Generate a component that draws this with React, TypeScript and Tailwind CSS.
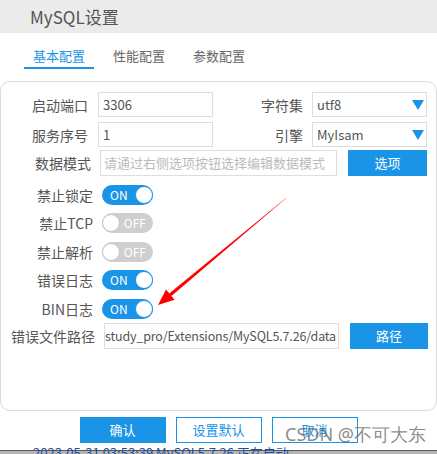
import React from 'react'

const BLUE = 'bg-[#1a94e6]'

function Toggle({ on }: { on: boolean }) {
  if (on) {
    return (
      <div className={`relative w-[51px] h-[20px] rounded-full ${BLUE} flex items-center`}>
        <span className="pl-[8px] text-[12px] leading-none text-white">ON</span>
        <span className="absolute right-0 top-[1px] w-[18px] h-[18px] rounded-full bg-white border border-[#1a94e6]" />
      </div>
    )
  }
  return (
    <div className="relative w-[51px] h-[20px] rounded-full bg-[#cfcfcf] flex items-center justify-end">
      <span className="pr-[7px] text-[12px] leading-none text-white">OFF</span>
      <span className="absolute left-0 top-[1px] w-[18px] h-[18px] rounded-full bg-white border border-[#c4c4c4]" />
    </div>
  )
}

function Caret() {
  return (
    <svg width="12" height="10" viewBox="0 0 12 10" className="mr-[2px]">
      <polygon points="0,0 12,0 6,10" fill="#1a94e6" />
    </svg>
  )
}

function Label({ w, children }: { w: string; children: React.ReactNode }) {
  return <div className={`${w} shrink-0 text-right text-[14px] leading-[20px] text-[#555]`}>{children}</div>
}

export default function App() {
  const toggles: { label: string; on: boolean; mt: string }[] = [
    { label: '禁止锁定', on: true, mt: 'mt-[9px]' },
    { label: '禁止TCP', on: false, mt: 'mt-[8px]' },
    { label: '禁止解析', on: false, mt: 'mt-[9px]' },
    { label: '错误日志', on: true, mt: 'mt-[8px]' },
    { label: 'BIN日志', on: true, mt: 'mt-[9px]' },
  ]

  return (
    <div className="relative w-[437px] h-[454px] overflow-hidden bg-white font-['Noto_Sans_CJK_SC',sans-serif]">
      {/* header */}
      <div className="h-[33px] bg-[#ebebeb] pl-[30px] flex items-center text-[17px] text-[#555]">MySQL设置</div>

      {/* tabs */}
      <div className="flex gap-[10px] pl-[24px] pt-[14px]">
        <div className="w-[70px] text-center text-[13px] leading-[18px] pb-[2px] text-[#1a94e6] border-b-2 border-[#1a94e6]">基本配置</div>
        <div className="w-[70px] text-center text-[13px] leading-[18px] pb-[2px] text-[#666]">性能配置</div>
        <div className="w-[70px] text-center text-[13px] leading-[18px] pb-[2px] text-[#666]">参数配置</div>
      </div>

      {/* panel */}
      <div className="mt-[12px] h-[330px] rounded-[10px] border border-[#dcdcdc] pt-[10px]">
        <div className="flex items-center h-[25px]">
          <Label w="w-[87px]">启动端口</Label>
          <div className="ml-[10px] w-[115px] h-[25px] border border-[#ddd] flex items-center pl-[4px] text-[13px] text-[#555]">3306</div>
          <Label w="w-[90px]">字符集</Label>
          <div className="ml-[9px] w-[115px] h-[25px] border border-[#ddd] flex items-center justify-between pl-[4px] text-[13px] text-[#555]">
            <span>utf8</span>
            <Caret />
          </div>
        </div>

        <div className="flex items-center h-[25px] mt-[5px]">
          <Label w="w-[87px]">服务序号</Label>
          <div className="ml-[10px] w-[115px] h-[25px] border border-[#ddd] flex items-center pl-[4px] text-[13px] text-[#555]">1</div>
          <Label w="w-[90px]">引擎</Label>
          <div className="ml-[9px] w-[115px] h-[25px] border border-[#ddd] flex items-center justify-between pl-[4px] text-[13px] text-[#555]">
            <span>MyIsam</span>
            <Caret />
          </div>
        </div>

        <div className="flex items-center h-[26px] mt-[3px]">
          <Label w="w-[90px]">数据模式</Label>
          <div className="ml-[9px] w-[237px] h-[26px] border border-[#ddd] flex items-center pl-[3px] text-[13px] text-[#bbb] whitespace-nowrap overflow-hidden">
            请通过右侧选项按钮选择编辑数据模式
          </div>
          <div className={`ml-[11px] w-[79px] h-[26px] ${BLUE} flex items-center justify-center text-[13px] text-white`}>选项</div>
        </div>

        {toggles.map((t) => (
          <div key={t.label} className={`flex items-center h-[20px] ${t.mt}`}>
            <Label w="w-[92px]">{t.label}</Label>
            <div className="ml-[9px]">
              <Toggle on={t.on} />
            </div>
          </div>
        ))}

        <div className="flex items-center h-[26px] mt-[4px]">
          <Label w="w-[94px]">错误文件路径</Label>
          <div className="ml-[9px] w-[235px] h-[26px] border border-[#ddd] flex items-center justify-end pr-[2px] text-[12.5px] tracking-[-0.15px] text-[#555] whitespace-nowrap overflow-hidden">
            <span className="shrink-0">D:/phpstudy_pro/Extensions/MySQL5.7.26/data</span>
          </div>
          <div className={`ml-[11px] w-[78px] h-[26px] ${BLUE} flex items-center justify-center text-[13px] text-white`}>路径</div>
        </div>
      </div>

      {/* buttons */}
      <div className="flex justify-center gap-[10px] mt-[6px]">
        <div className={`w-[86px] h-[26px] ${BLUE} flex items-center justify-center text-[13px] text-white`}>确认</div>
        <div className="w-[86px] h-[26px] border border-[#1a94e6] flex items-center justify-center text-[13px] text-[#1a94e6]">设置默认</div>
        <div className="w-[86px] h-[26px] border border-[#1a94e6] flex items-center justify-center text-[13px] text-[#1a94e6]">取消</div>
      </div>

      {/* log line behind the dialog */}
      <div className="mt-[2px] h-[11px] overflow-hidden bg-[linear-gradient(to_bottom,white_5px,#5a5a5a_5px,#5a5a5a_6px,#b4b4b4_6px)]">
        <div className="pl-[33px] text-[13px] leading-[16px] text-[#1f4f9e] whitespace-nowrap">2023-05-31 03:53:39 MySQL5.7.26 正在启动......</div>
      </div>

      {/* watermark */}
      <div className="absolute left-[285px] top-[423px] text-[18px] leading-[22px] text-[#555]/70 whitespace-nowrap font-['Noto_Sans',sans-serif]">
        CSDN @不可大东
      </div>

      {/* red arrow annotation */}
      <svg className="absolute left-0 top-0 pointer-events-none" width="437" height="454" viewBox="0 0 437 454">
        <polygon points="286.3,197.8 285.8,198.6 171.4,296.0 169.2,293.4" fill="#ff0000" />
        <polygon points="158,305 174.6,299.7 166.0,289.5" fill="#ff0000" />
      </svg>
    </div>
  )
}
